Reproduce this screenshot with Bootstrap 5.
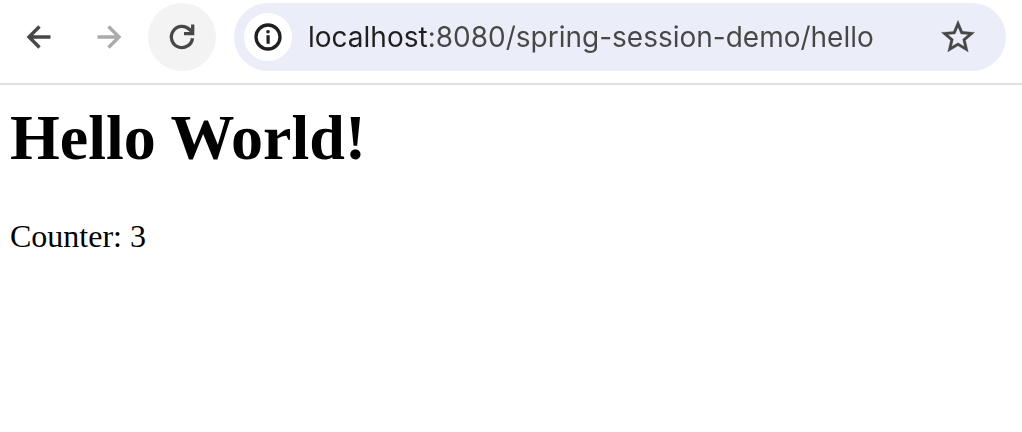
<!DOCTYPE html>
<html lang="en">
<head>
<meta charset="utf-8">
<meta name="viewport" content="width=device-width, initial-scale=1">
<title>Hello World!</title>
<link href="https://cdn.jsdelivr.net/npm/bootstrap@5.3.0/dist/css/bootstrap.min.css" rel="stylesheet">
<style>
  body { font-family: "Liberation Serif", serif; color: #000; background: #fff; }
  .toolbar { padding: 3px 16px 12px 4px; border-bottom: 2px solid #dfdfdf; }
  .tool { width: 68px; height: 68px; color: #474747; }
  .tool:disabled { color: #ababab; border-color: transparent; opacity: 1; }
  .tool-active, .tool-active:hover { background: #f3f3f3; }
  .address { height: 68px; background: #ebeef8; padding: 0 10px; margin-left: 18px; }
  .site-info { width: 48px; height: 48px; color: #1f1f1f; background: #fff; }
  .star { width: 56px; height: 48px; margin-right: 10px; color: #474747; }
  /* the host name is darker than the rest of the address */
  .url, .url:focus {
    font: 28px/36px Inter, sans-serif;
    background: linear-gradient(to right, #1f1f1f 119px, #474747 119px);
    -webkit-background-clip: text;
    background-clip: text;
    -webkit-text-fill-color: transparent;
    caret-color: #1f1f1f;
    box-shadow: none;
    margin-left: 16px;
  }
  main { padding: 17px 10px; }
  h1 { font-size: 64px; line-height: 72px; font-weight: 700; margin-bottom: 44px; }
  .counter { font-size: 32px; line-height: 36px; }
</style>
</head>
<body>
<header class="toolbar d-flex align-items-center">
  <button type="button" class="tool btn rounded-circle border-0 p-0 d-flex align-items-center justify-content-center" aria-label="Back">
    <svg width="32" height="32" viewBox="0 0 32 32" fill="none" stroke="currentColor" stroke-width="3.400"><path d="M28.500 16H7M17.500 5.500L7 16l10.500 10.500"/></svg>
  </button>
  <button type="button" disabled class="tool btn rounded-circle border-0 p-0 ms-1 d-flex align-items-center justify-content-center" aria-label="Forward">
    <svg width="32" height="32" viewBox="0 0 32 32" fill="none" stroke="currentColor" stroke-width="3.400"><path d="M3.500 16H25M14.500 5.500L25 16 14.500 26.500"/></svg>
  </button>
  <button type="button" class="tool tool-active btn rounded-circle border-0 p-0 ms-1 d-flex align-items-center justify-content-center" aria-label="Reload">
    <svg width="32" height="32" viewBox="0 0 32 32" fill="none" stroke="currentColor" stroke-width="3.300"><path d="M26.500 17.200A10.600 10.600 0 1 1 23.500 8.500L26.700 12M26.700 3.500V12.600H18"/></svg>
  </button>
  <div class="address rounded-pill d-flex align-items-center flex-grow-1">
    <button type="button" class="site-info btn rounded-circle border-0 p-0 flex-shrink-0 d-flex align-items-center justify-content-center" aria-label="View site information">
      <svg width="32" height="32" viewBox="0 0 32 32"><circle cx="16" cy="16" r="12" fill="none" stroke="currentColor" stroke-width="3.300"/><path d="M14.500 14.300h3.200v8.500h-3.200z" fill="currentColor"/><circle cx="16" cy="10.700" r="1.800" fill="currentColor"/></svg>
    </button>
    <input type="text" class="url form-control border-0 rounded-0 p-0" aria-label="Address" spellcheck="false" value="localhost:8080/spring-session-demo/hello">
    <button type="button" class="star btn border-0 p-0 flex-shrink-0 d-flex align-items-center justify-content-center" aria-label="Bookmark this page">
      <svg width="40" height="40" viewBox="0 0 24 24" fill="currentColor" stroke="currentColor" stroke-width=".15"><path d="M22 9.240l-7.190-.620L12 2 9.190 8.630 2 9.240l5.460 4.730L5.820 21 12 17.270 18.180 21l-1.630-7.030L22 9.240zM12 15.400l-3.760 2.270 1-4.280-3.320-2.880 4.380-.380L12 6.100l1.710 4.040 4.380.380-3.320 2.880 1 4.280L12 15.400z"/></svg>
    </button>
  </div>
</header>
<main>
  <h1>Hello World!</h1>
  <p class="counter mb-0">Counter: 3</p>
</main>
<script src="https://cdn.jsdelivr.net/npm/bootstrap@5.3.0/dist/js/bootstrap.bundle.min.js"></script>
</body>
</html>
